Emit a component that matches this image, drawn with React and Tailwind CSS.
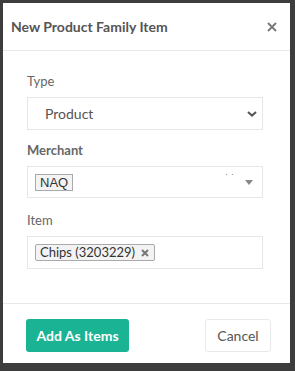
export default function App() {
  return (
    <div className="w-[295px] h-[371px] bg-[#3d3d3d] pt-[3px] pl-[3px]" style={{ fontFamily: 'Lato, "Noto Sans", sans-serif' }}>
      <div className="w-[287px] h-[360px] bg-white flex flex-col">
        <div className="h-[48px] flex items-center justify-between pl-2 pr-[13px] border-b border-[#e7e7ec] shrink-0">
          <h2 className="text-[14px] font-bold text-[#555]">New Product Family Item</h2>
          <svg width="10" height="10" viewBox="0 0 10 10" className="text-[#777]">
            <path d="M1 1L9 9M9 1L1 9" stroke="currentColor" strokeWidth="1.8" />
          </svg>
        </div>

        <div className="flex-1 pl-6 pr-[27px] pt-[22px]">
          <label className="block text-[13px] text-[#666] leading-4">Type</label>
          <div className="mt-[8px] h-[33px] border border-[#e5e6e7] flex items-center justify-between pl-[17px] pr-[5px]">
            <span className="text-[14px] text-[#555]">Product</span>
            <svg width="10" height="6" viewBox="0 0 10 6" className="text-[#555]">
              <path d="M1 1l4 3.6L9 1" stroke="currentColor" strokeWidth="2" fill="none" />
            </svg>
          </div>

          <label className="block mt-[12px] text-[13px] font-bold text-[#666] leading-4">Merchant</label>
          <div className="mt-[8px] h-[32px] border border-[#e5e6e7] flex items-center justify-between pl-[7px] pr-[9px] relative">
            <span className="h-[17px] px-[4px] flex items-center border border-[#aaa] bg-[#f3f3f3] text-[13px] text-[#333] leading-none" style={{ fontFamily: '"Liberation Sans", Arial, sans-serif' }}>NAQ</span>
            <span className="absolute right-[29px] top-[7px] flex gap-[5px]">
              <span className="w-[1px] h-[1px] bg-[#999]" />
              <span className="w-[1px] h-[1px] bg-[#999]" />
            </span>
            <svg width="8" height="5" viewBox="0 0 8 5" className="text-[#888]">
              <path d="M0 0h8L4 5z" fill="currentColor" />
            </svg>
          </div>

          <label className="block mt-[14px] text-[13px] text-[#666] leading-4">Item</label>
          <div className="mt-[8px] h-[33px] border border-[#e5e6e7] flex items-center pl-[7px]">
            <span className="h-[17px] pl-[4px] pr-[5px] flex items-center gap-[6px] border border-[#aaa] bg-[#f3f3f3] rounded-[2px] text-[13px] text-[#333] leading-none">
              Chips (3203229)
              <svg width="8" height="8" viewBox="0 0 8 8" className="text-[#777]">
                <path d="M1 1L7 7M7 1L1 7" stroke="currentColor" strokeWidth="2" />
              </svg>
            </span>
          </div>
        </div>

        <div className="h-[60px] shrink-0 border-t border-[#e7e7ec] flex items-start justify-between pt-[15px] pl-[23px] pr-[19px]">
          <button className="h-[33px] w-[103px] rounded-[3px] bg-[#1ab394] text-white text-[14px] font-bold">Add As Items</button>
          <button className="h-[33px] w-[66px] rounded-[3px] border border-[#e7eaec] bg-white text-[#555] text-[14px]">Cancel</button>
        </div>
      </div>
    </div>
  )
}
